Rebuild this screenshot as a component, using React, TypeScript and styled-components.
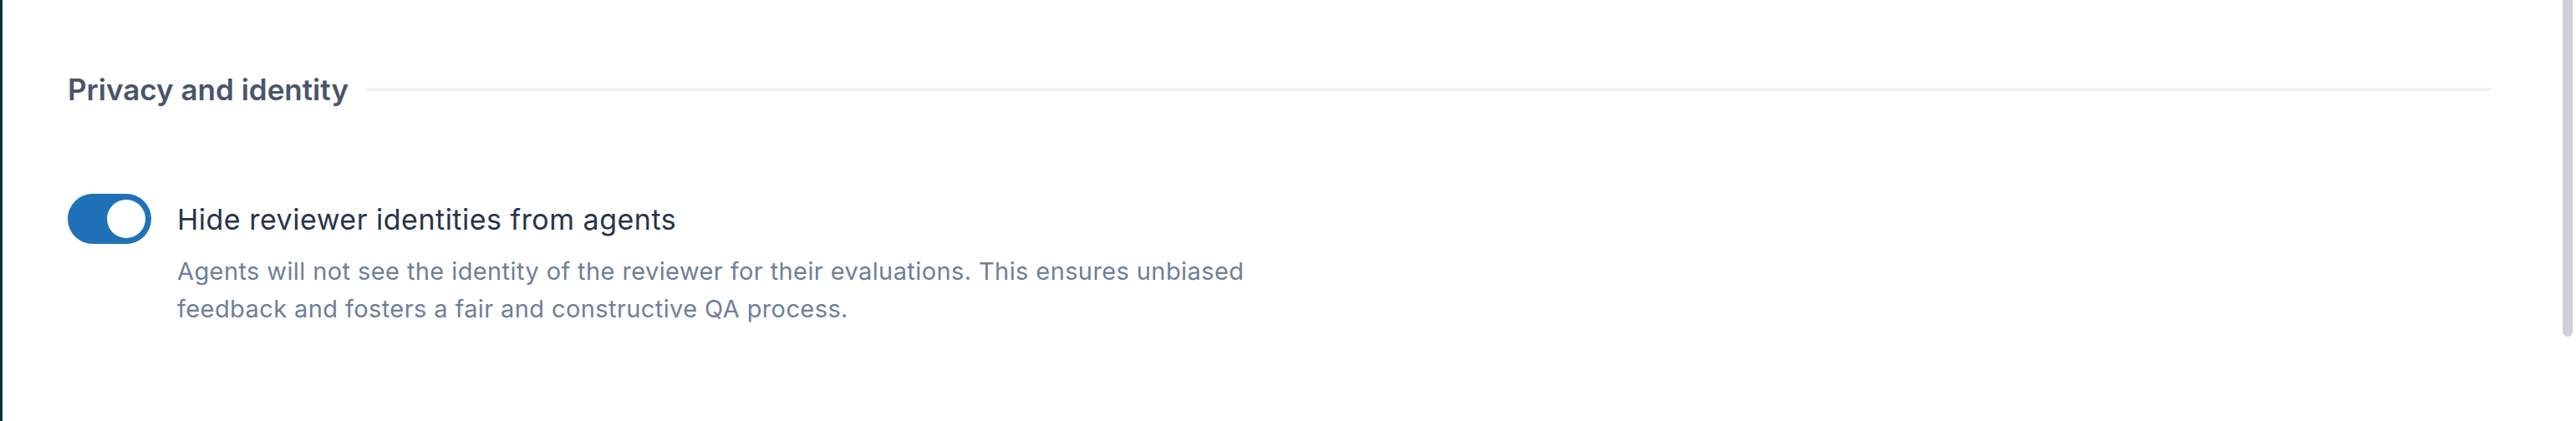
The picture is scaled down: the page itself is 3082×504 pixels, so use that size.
import React, { useState } from 'react';
import styled, { createGlobalStyle } from 'styled-components';

const GlobalStyle = createGlobalStyle`
  html, body {
    margin: 0;
    padding: 0;
    background: #ffffff;
  }

  body {
    font-family: Inter, 'Noto Sans', sans-serif;
    -webkit-font-smoothing: antialiased;
  }
`;

const Frame = styled.div`
  position: relative;
  height: 504px;
  overflow: hidden;
  background: #ffffff;
  border-left: 3px solid #0b3039;
  box-sizing: border-box;
`;

const Content = styled.div`
  display: flex;
  flex-direction: column;
  padding: 86px 102px 0 78px;
`;

const SectionHeader = styled.div`
  display: flex;
  align-items: center;
  gap: 22px;
`;

const SectionTitle = styled.h2`
  margin: 0;
  font-size: 35px;
  font-weight: 600;
  color: #4a5568;
  white-space: nowrap;
`;

const Divider = styled.div`
  flex: 1;
  height: 4px;
  background: #edf1f5;
`;

const SettingRow = styled.div`
  display: grid;
  grid-template-columns: 100px 1fr;
  column-gap: 31px;
  align-items: center;
  margin-top: 104px;
`;

const Toggle = styled.button<{ $on: boolean }>`
  position: relative;
  width: 100px;
  height: 60px;
  padding: 0;
  border: none;
  border-radius: 30px;
  cursor: pointer;
  background: ${({ $on }) => ($on ? '#1f72b8' : '#cbd5e0')};
  transition: background 0.2s ease;

  &::after {
    content: '';
    position: absolute;
    top: 7px;
    left: ${({ $on }) => ($on ? '47px' : '7px')};
    width: 46px;
    height: 46px;
    border-radius: 50%;
    background: #ffffff;
    transition: left 0.2s ease;
  }
`;

const SettingLabel = styled.div`
  font-size: 34px;
  font-weight: 400;
  letter-spacing: 0.5px;
  color: #27344a;
`;

const SettingHelp = styled.p`
  grid-column: 2;
  margin: 10px 0 0;
  max-width: 1380px;
  font-size: 29px;
  line-height: 45px;
  letter-spacing: 0.4px;
  color: #6f7f98;
`;

const ScrollThumb = styled.div`
  position: absolute;
  top: 0;
  right: 4px;
  width: 12px;
  height: 403px;
  border-radius: 0 0 6px 6px;
  background: #cdd0d4;
`;

export default function App() {
  const [hideReviewer, setHideReviewer] = useState(true);

  return (
    <>
      <GlobalStyle />
      <Frame>
        <Content>
          <SectionHeader>
            <SectionTitle>Privacy and identity</SectionTitle>
            <Divider />
          </SectionHeader>

          <SettingRow>
            <Toggle
              $on={hideReviewer}
              aria-pressed={hideReviewer}
              onClick={() => setHideReviewer((v) => !v)}
            />
            <SettingLabel>Hide reviewer identities from agents</SettingLabel>
            <SettingHelp>
              Agents will not see the identity of the reviewer for their evaluations. This ensures
              unbiased feedback and fosters a fair and constructive QA process.
            </SettingHelp>
          </SettingRow>
        </Content>
        <ScrollThumb />
      </Frame>
    </>
  );
}
